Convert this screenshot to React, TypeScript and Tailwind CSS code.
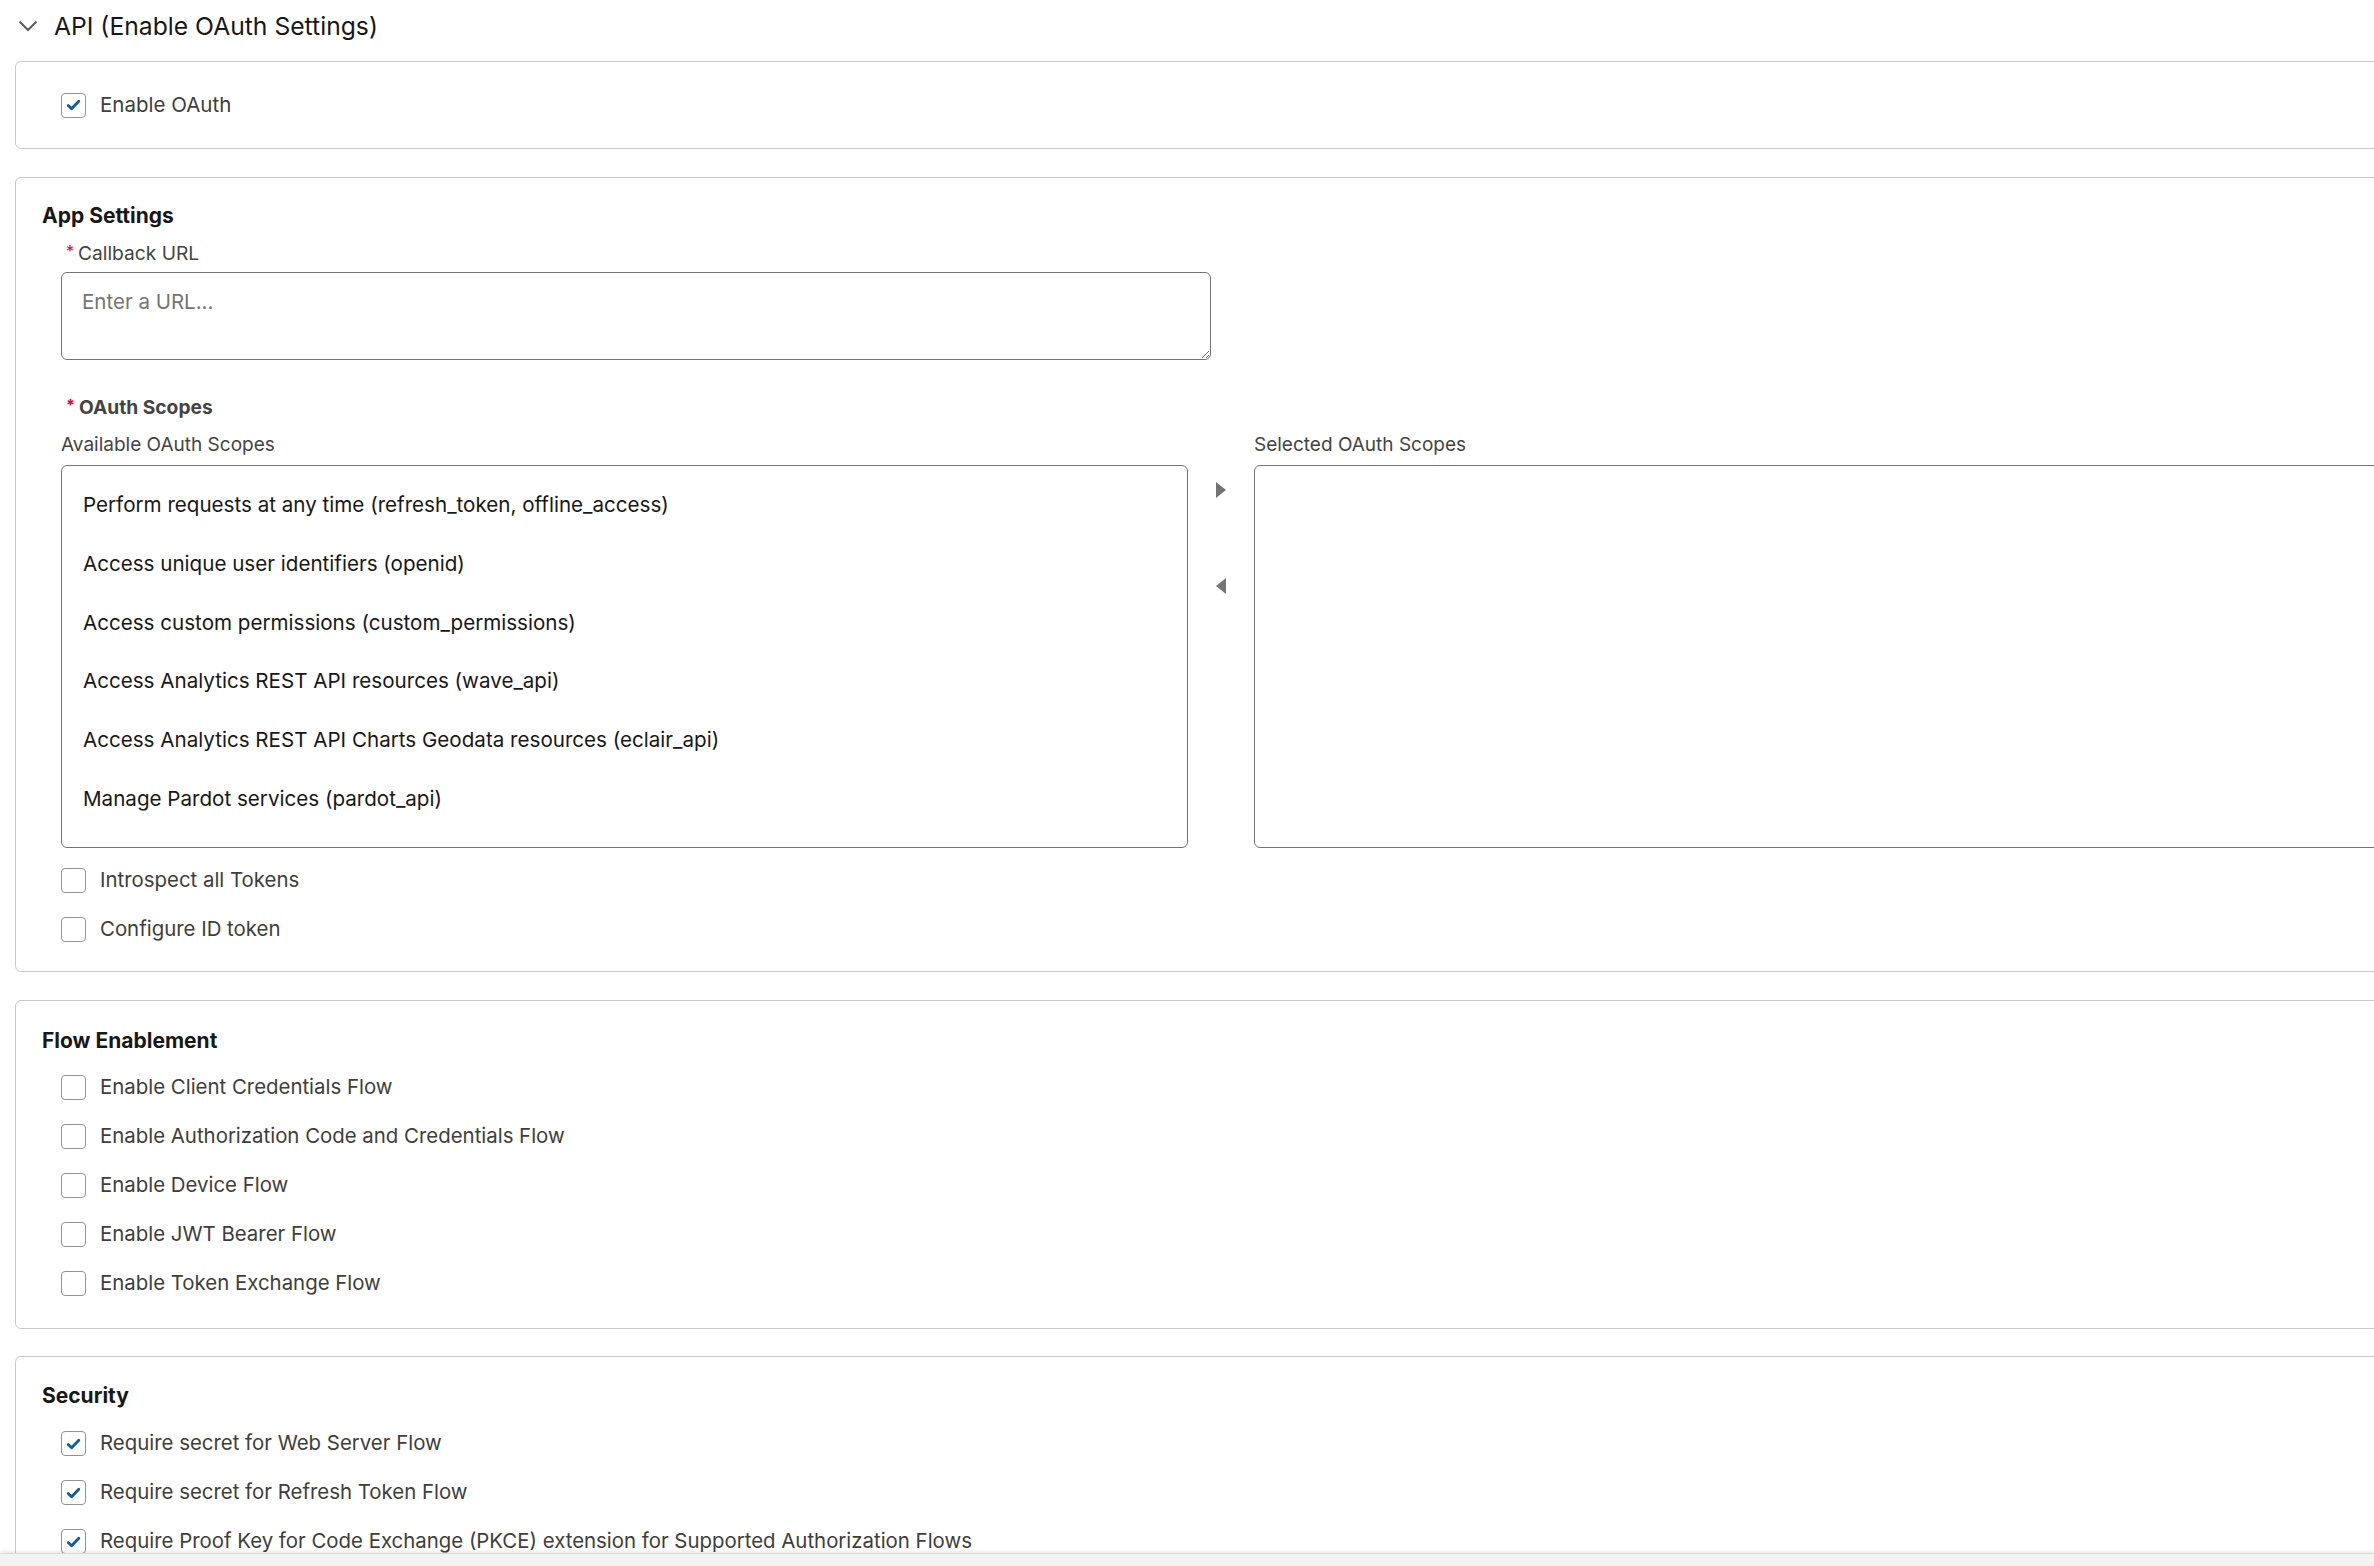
import React from 'react';

const scopes = [
  'Perform requests at any time (refresh_token, offline_access)',
  'Access unique user identifiers (openid)',
  'Access custom permissions (custom_permissions)',
  'Access Analytics REST API resources (wave_api)',
  'Access Analytics REST API Charts Geodata resources (eclair_api)',
  'Manage Pardot services (pardot_api)',
];

const flows = [
  'Enable Client Credentials Flow',
  'Enable Authorization Code and Credentials Flow',
  'Enable Device Flow',
  'Enable JWT Bearer Flow',
  'Enable Token Exchange Flow',
];

const security = [
  'Require secret for Web Server Flow',
  'Require secret for Refresh Token Flow',
  'Require Proof Key for Code Exchange (PKCE) extension for Supported Authorization Flows',
];

function Checkbox({ checked }: { checked?: boolean }) {
  return (
    <span className="w-[25px] h-[25px] shrink-0 rounded-[4px] border border-[#939393] bg-white flex items-center justify-center">
      {checked && (
        <svg width="15" height="12" viewBox="0 0 15 12">
          <path
            d="M2.2 6.6 L5.6 9.8 L12.8 2.2"
            stroke="#0b5cab"
            strokeWidth="2.8"
            fill="none"
            strokeLinecap="round"
            strokeLinejoin="round"
          />
        </svg>
      )}
    </span>
  );
}

function CheckRow({ label, checked }: { label: string; checked?: boolean }) {
  return (
    <div className="h-[49px] flex items-center gap-[14px] pl-[45px]">
      <Checkbox checked={checked} />
      <span className="text-[20.4px] text-[#3e3e3c]">{label}</span>
    </div>
  );
}

function Required() {
  return <span className="text-[#ea001e] text-[16px] mr-[4px] ml-[5px] relative top-[-2px]">*</span>;
}

function Card({ children, className = '' }: { children: React.ReactNode; className?: string }) {
  return (
    <div className={`ml-[15px] w-[2420px] border border-[#c9c9c9] rounded-[6px] bg-white ${className}`}>
      {children}
    </div>
  );
}

function SectionTitle({ children }: { children: React.ReactNode }) {
  return (
    <h3 className="h-[28px] leading-[28px] pl-[26px] text-[21px] font-bold text-[#181818]">{children}</h3>
  );
}

export default function App() {
  return (
    <div className="relative w-full h-[1566px] overflow-hidden bg-white font-['Inter','Noto_Sans',sans-serif]">
      {/* Encabezado de la sección */}
      <div className="h-[52px] flex items-center pl-[18px] gap-[16px]">
        <svg width="20" height="12" viewBox="0 0 20 12">
          <polyline points="1.5,1.5 10,10 18.5,1.5" fill="none" stroke="#5c5c5c" strokeWidth="2" />
        </svg>
        <h2 className="text-[24.7px] text-[#181818] leading-none">API (Enable OAuth Settings)</h2>
      </div>

      {/* Enable OAuth */}
      <Card className="mt-[9px] h-[88px] flex items-center">
        <div className="flex items-center gap-[14px] pl-[45px]">
          <Checkbox checked />
          <span className="text-[20.5px] text-[#3e3e3c]">Enable OAuth</span>
        </div>
      </Card>

      {/* App Settings */}
      <Card className="mt-[28px] pt-[24px] pb-[17px]">
        <SectionTitle>App Settings</SectionTitle>
        <div className="pl-[45px]">
          <div className="mt-[10px] h-[26px] flex items-center text-[19.2px] text-[#444444]">
            <Required />
            Callback URL
          </div>
          <textarea
            readOnly
            placeholder="Enter a URL..."
            className="mt-[6px] block w-[1150px] h-[88px] rounded-[6px] border border-[#747474] px-[20px] pt-[14px] text-[20.5px] text-[#181818] placeholder:text-[#747474] outline-none"
          />

          <div className="mt-[34px] h-[26px] flex items-center text-[19.2px] font-bold text-[#444444]">
            <Required />
            OAuth Scopes
          </div>

          <div className="mt-[12px] flex">
            <div className="w-[1127px] shrink-0">
              <div className="h-[26px] flex items-center text-[19px] text-[#444444]">Available OAuth Scopes</div>
              <div className="mt-[7px] h-[383px] rounded-[6px] border border-[#747474] pt-[10px]">
                {scopes.map((s) => (
                  <div key={s} className="h-[58.8px] flex items-center px-[21px] text-[20.6px] text-[#181818]">
                    {s}
                  </div>
                ))}
              </div>
            </div>

            <div className="w-[66px] shrink-0 pt-[33px] flex flex-col items-center">
              <div className="mt-[17px]">
                <svg width="10" height="16" viewBox="0 0 10 16">
                  <polygon points="0,0 10,8 0,16" fill="#747474" />
                </svg>
              </div>
              <div className="mt-[80px]">
                <svg width="10" height="16" viewBox="0 0 10 16">
                  <polygon points="10,0 0,8 10,16" fill="#747474" />
                </svg>
              </div>
            </div>

            <div className="w-[1200px] shrink-0">
              <div className="h-[26px] flex items-center text-[19px] text-[#444444]">Selected OAuth Scopes</div>
              <div className="mt-[7px] h-[383px] rounded-[6px] border border-[#747474]" />
            </div>
          </div>
        </div>

        <div className="mt-[8px]">
          <CheckRow label="Introspect all Tokens" />
          <CheckRow label="Configure ID token" />
        </div>
      </Card>

      {/* Flow Enablement */}
      <Card className="mt-[28px] pt-[26px] pb-[20px]">
        <SectionTitle>Flow Enablement</SectionTitle>
        <div className="mt-[8px]">
          {flows.map((f) => (
            <CheckRow key={f} label={f} />
          ))}
        </div>
      </Card>

      {/* Security */}
      <Card className="mt-[27px] pt-[25px] pb-[20px]">
        <SectionTitle>Security</SectionTitle>
        <div className="mt-[9px]">
          {security.map((s) => (
            <CheckRow key={s} label={s} checked />
          ))}
        </div>
      </Card>

      {/* Barra inferior */}
      <div className="absolute left-0 right-0 bottom-0 h-[13px] bg-[#f3f3f3] border-t border-[#dddbda] shadow-[0_-2px_3px_rgba(0,0,0,0.08)]" />
    </div>
  );
}
